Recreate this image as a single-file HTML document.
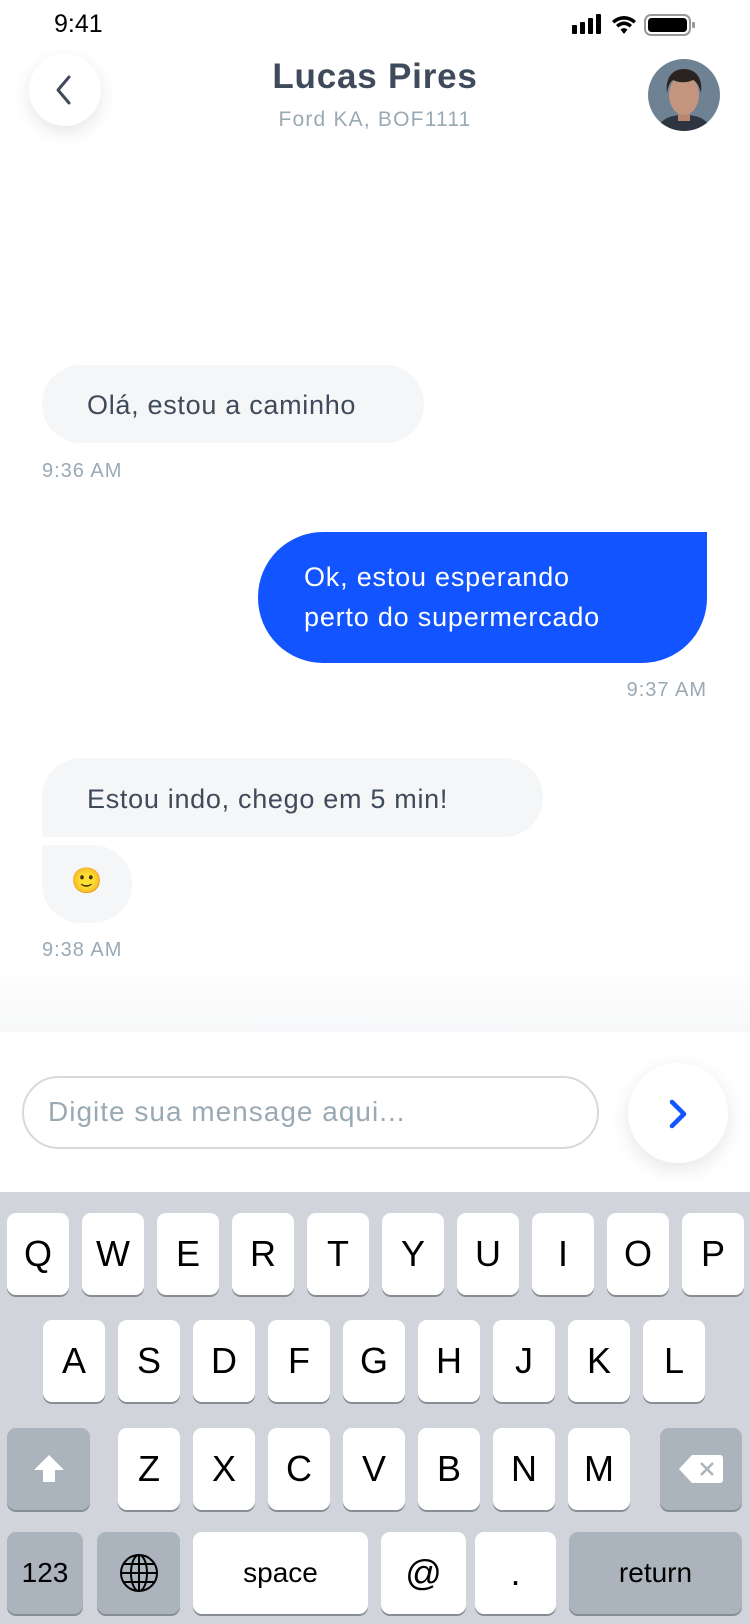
<!DOCTYPE html>
<html><head><meta charset="utf-8"><style>
*{margin:0;padding:0;box-sizing:border-box}
body{width:750px;height:1624px;background:#fff;position:relative;overflow:hidden;font-family:"Liberation Sans",sans-serif}
.a{position:absolute}
.t{color:#3f4a5a}
.time{color:#9aaab4;font-size:20px;letter-spacing:1px}
.bub{background:#f5f6f8;color:#3f4a5a;font-size:27px;letter-spacing:.7px;white-space:nowrap}
.kb{position:absolute;left:0;top:1192px;width:750px;height:432px;background:#d1d5db}
.k{position:absolute;background:#fff;border-radius:9px;box-shadow:0 2px 0 #888d94;font-size:36px;color:#000;display:flex;align-items:center;justify-content:center}
.g{background:#abb3bd}
</style></head><body>
<div class="a" style="left:54px;top:10px;font-size:25px;color:#000">9:41</div>
<svg class="a" style="left:570px;top:13px" width="140" height="24" viewBox="0 0 140 24">
<rect x="2" y="12" width="5" height="9" rx="1" fill="#000"/><rect x="10" y="9" width="5" height="12" rx="1" fill="#000"/><rect x="18" y="5" width="5" height="16" rx="1" fill="#000"/><rect x="26" y="1" width="5" height="20" rx="1" fill="#000"/>
<path d="M42 8a17 17 0 0 1 24 0l-2.5 2.5a13.5 13.5 0 0 0-19 0z M46 12a11 11 0 0 1 16 0l-2.5 2.5a7.5 7.5 0 0 0-11 0z M50.5 16.5a5 5 0 0 1 7 0L54 21z" fill="#000"/>
<rect x="75" y="2" width="45" height="20" rx="6" fill="none" stroke="#999" stroke-width="2"/><rect x="78" y="5" width="39" height="14" rx="3.5" fill="#000"/><rect x="122" y="9" width="3" height="6" rx="1" fill="#999"/>
</svg>
<div class="a" style="left:29px;top:54px;width:72px;height:72px;border-radius:50%;background:#fff;box-shadow:0 6px 18px rgba(0,0,0,.1)"></div>
<svg class="a" style="left:52px;top:74px" width="24" height="32" viewBox="0 0 24 32"><path d="M17 3L6 16l11 13" fill="none" stroke="#3f4a5a" stroke-width="3" stroke-linecap="round" stroke-linejoin="round"/></svg>
<div class="a t" style="left:0;width:750px;top:57px;text-align:center;font-size:35px;font-weight:bold;letter-spacing:.8px">Lucas Pires</div>
<div class="a" style="left:0;width:750px;top:108px;text-align:center;font-size:21px;letter-spacing:1.2px;color:#9aaab4">Ford KA, BOF1111</div>
<svg class="a" style="left:648px;top:59px" width="72" height="72" viewBox="0 0 72 72">
<defs><clipPath id="c"><circle cx="36" cy="36" r="36"/></clipPath></defs>
<g clip-path="url(#c)"><rect width="72" height="72" fill="#6f8294"/>
<path d="M8 72c4-12 14-16 28-16s24 4 28 16z" fill="#2f3540"/>
<path d="M30 54h12v8H30z" fill="#b88670"/>
<ellipse cx="36" cy="36" rx="15" ry="20" fill="#c4957e"/>
<path d="M19 34c-2-16 6-24 17-24s19 8 17 24c-2-8-5-12-8-13-6 3-14 3-20 0-3 2-5 6-6 13z" fill="#2a2320"/></g></svg>

<div class="a bub" style="left:42px;top:365px;width:382px;height:78px;border-radius:39px;padding:25px 0 0 45px">Olá, estou a caminho</div>
<div class="a time" style="left:42px;top:460px">9:36 AM</div>
<div class="a" style="left:258px;top:532px;width:449px;height:131px;background:#1254ff;color:#fff;font-size:27px;letter-spacing:.8px;line-height:40px;border-radius:65px 0 65px 65px;padding:25px 0 0 46px;white-space:nowrap">Ok, estou esperando<br>perto do supermercado</div>
<div class="a time" style="left:500px;width:207px;text-align:right;top:679px">9:37 AM</div>
<div class="a bub" style="left:42px;top:758px;width:501px;height:79px;border-radius:39px 39px 39px 0;padding:26px 0 0 45px">Estou indo, chego em 5 min!</div>
<div class="a bub" style="left:42px;top:845px;width:90px;height:78px;border-radius:0 39px 39px 39px;padding:22px 0 0 29px;font-size:25px">🙂</div>
<div class="a time" style="left:42px;top:939px">9:38 AM</div>

<div class="a" style="left:0;top:960px;width:750px;height:72px;background:linear-gradient(#fff,#f7f8f9)"></div>
<div class="a" style="left:22px;top:1076px;width:577px;height:73px;border:2px solid #d5dadd;border-radius:37px;color:#9aaab4;font-size:28px;letter-spacing:1px;padding:18px 0 0 24px;white-space:nowrap">Digite sua mensage aqui...</div>
<div class="a" style="left:628px;top:1063px;width:100px;height:100px;border-radius:50%;background:#fff;box-shadow:0 6px 20px rgba(0,0,0,.1)"></div>
<svg class="a" style="left:664px;top:1097px" width="28" height="34" viewBox="0 0 28 34"><path d="M8 5l12 12L8 29" fill="none" stroke="#1254ff" stroke-width="4.5" stroke-linecap="round" stroke-linejoin="round"/></svg>

<div class="kb"></div>
<div class="k" style="left:7px;top:1213px;width:62px;height:82px">Q</div>
<div class="k" style="left:82px;top:1213px;width:62px;height:82px">W</div>
<div class="k" style="left:157px;top:1213px;width:62px;height:82px">E</div>
<div class="k" style="left:232px;top:1213px;width:62px;height:82px">R</div>
<div class="k" style="left:307px;top:1213px;width:62px;height:82px">T</div>
<div class="k" style="left:382px;top:1213px;width:62px;height:82px">Y</div>
<div class="k" style="left:457px;top:1213px;width:62px;height:82px">U</div>
<div class="k" style="left:532px;top:1213px;width:62px;height:82px">I</div>
<div class="k" style="left:607px;top:1213px;width:62px;height:82px">O</div>
<div class="k" style="left:682px;top:1213px;width:62px;height:82px">P</div>
<div class="k" style="left:43px;top:1320px;width:62px;height:82px">A</div>
<div class="k" style="left:118px;top:1320px;width:62px;height:82px">S</div>
<div class="k" style="left:193px;top:1320px;width:62px;height:82px">D</div>
<div class="k" style="left:268px;top:1320px;width:62px;height:82px">F</div>
<div class="k" style="left:343px;top:1320px;width:62px;height:82px">G</div>
<div class="k" style="left:418px;top:1320px;width:62px;height:82px">H</div>
<div class="k" style="left:493px;top:1320px;width:62px;height:82px">J</div>
<div class="k" style="left:568px;top:1320px;width:62px;height:82px">K</div>
<div class="k" style="left:643px;top:1320px;width:62px;height:82px">L</div>
<div class="k g" style="left:7px;top:1428px;width:83px;height:82px"><svg width="34" height="32" viewBox="0 0 34 32"><path d="M17 2L2 17h9v12h12V17h9z" fill="#fff"/></svg></div>
<div class="k" style="left:118px;top:1428px;width:62px;height:82px">Z</div>
<div class="k" style="left:193px;top:1428px;width:62px;height:82px">X</div>
<div class="k" style="left:268px;top:1428px;width:62px;height:82px">C</div>
<div class="k" style="left:343px;top:1428px;width:62px;height:82px">V</div>
<div class="k" style="left:418px;top:1428px;width:62px;height:82px">B</div>
<div class="k" style="left:493px;top:1428px;width:62px;height:82px">N</div>
<div class="k" style="left:568px;top:1428px;width:62px;height:82px">M</div>
<div class="k g" style="left:660px;top:1428px;width:82px;height:82px"><svg width="46" height="32" viewBox="0 0 46 32"><path d="M14 2h28a3 3 0 0 1 3 3v22a3 3 0 0 1-3 3H14L1 16z" fill="#fff"/><path d="M23 10l12 12M35 10L23 22" stroke="#abb3bd" stroke-width="2.5"/></svg></div>
<div class="k g" style="left:7px;top:1532px;width:76px;height:82px;font-size:28px">123</div>
<div class="k g" style="left:97px;top:1532px;width:83px;height:82px"><svg width="40" height="40" viewBox="0 0 40 40" fill="none" stroke="#000" stroke-width="2"><circle cx="20" cy="20" r="18"/><ellipse cx="20" cy="20" rx="8" ry="18"/><path d="M20 2v36M2 20h36M5 11h30M5 29h30"/></svg></div>
<div class="k" style="left:193px;top:1532px;width:175px;height:82px;font-size:28px">space</div>
<div class="k" style="left:381px;top:1532px;width:85px;height:82px">@</div>
<div class="k" style="left:475px;top:1532px;width:81px;height:82px">.</div>
<div class="k g" style="left:569px;top:1532px;width:173px;height:82px;font-size:28px">return</div>
</body></html>
